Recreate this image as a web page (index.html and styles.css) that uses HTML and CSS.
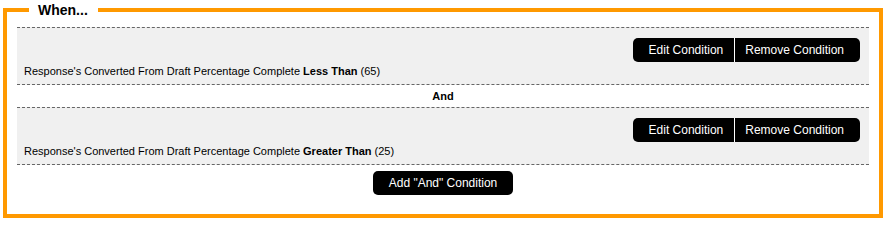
FILE: index.html
```html
<!DOCTYPE html>
<html>
<head>
<meta charset="utf-8">
<title>When...</title>
<link rel="stylesheet" href="styles.css">
</head>
<body>
<fieldset class="when">
  <legend class="when-title">When...</legend>
  <div class="cond">
    <div class="cond-actions">
      <button class="btn btn-left">Edit Condition</button><button class="btn btn-right">Remove Condition</button>
    </div>
    <div class="cond-text">Response's Converted From Draft Percentage Complete <b>Less Than</b> (65)</div>
  </div>
  <div class="joiner">And</div>
  <div class="cond">
    <div class="cond-actions">
      <button class="btn btn-left">Edit Condition</button><button class="btn btn-right">Remove Condition</button>
    </div>
    <div class="cond-text">Response's Converted From Draft Percentage Complete <b>Greater Than</b> (25)</div>
  </div>
  <div class="add-row">
    <button class="btn btn-single">Add "And" Condition</button>
  </div>
</fieldset>
</body>
</html>
```
FILE: styles.css
```css
html, body {
  margin: 0;
  padding: 0;
  background: #ffffff;
}
body {
  font-family: "Liberation Sans", Arial, sans-serif;
  color: #000;
}
.when {
  margin: 0 4px 0 3px;
  border: 4px solid #ff9900;
  padding: 7px 10px 19px 10px;
  min-width: 0;
}
.when-title {
  margin-left: 12px;
  padding: 0 10px 0 9px;
  font-size: 14px;
  font-weight: bold;
  line-height: 20px;
}
.cond {
  border-top: 1px dashed #666;
  border-bottom: 1px dashed #666;
  background: #f0f0f0;
  padding: 10px 9px 6px 7px;
}
.cond-actions {
  display: flex;
  justify-content: flex-end;
}
.cond-text {
  margin-top: 2px;
  font-size: 11px;
  line-height: 14px;
}
.cond-text b {
  font-weight: bold;
}
.joiner {
  text-align: center;
  font-size: 11px;
  font-weight: bold;
  line-height: 22px;
}
.btn {
  font-family: "Liberation Sans", Arial, sans-serif;
  font-size: 12px;
  line-height: 24px;
  height: 24px;
  background: #000;
  color: #fff;
  border: 0;
  margin: 0;
  cursor: pointer;
}
.btn-left {
  padding: 0 11px 0 16px;
  border-radius: 5px 0 0 5px;
  border-right: 1px solid #fff;
}
.btn-right {
  padding: 0 16px 0 10px;
  border-radius: 0 5px 5px 0;
}
.btn-single {
  padding: 0 16px;
  border-radius: 5px;
}
.add-row {
  display: flex;
  justify-content: center;
  margin-top: 6px;
}
```
